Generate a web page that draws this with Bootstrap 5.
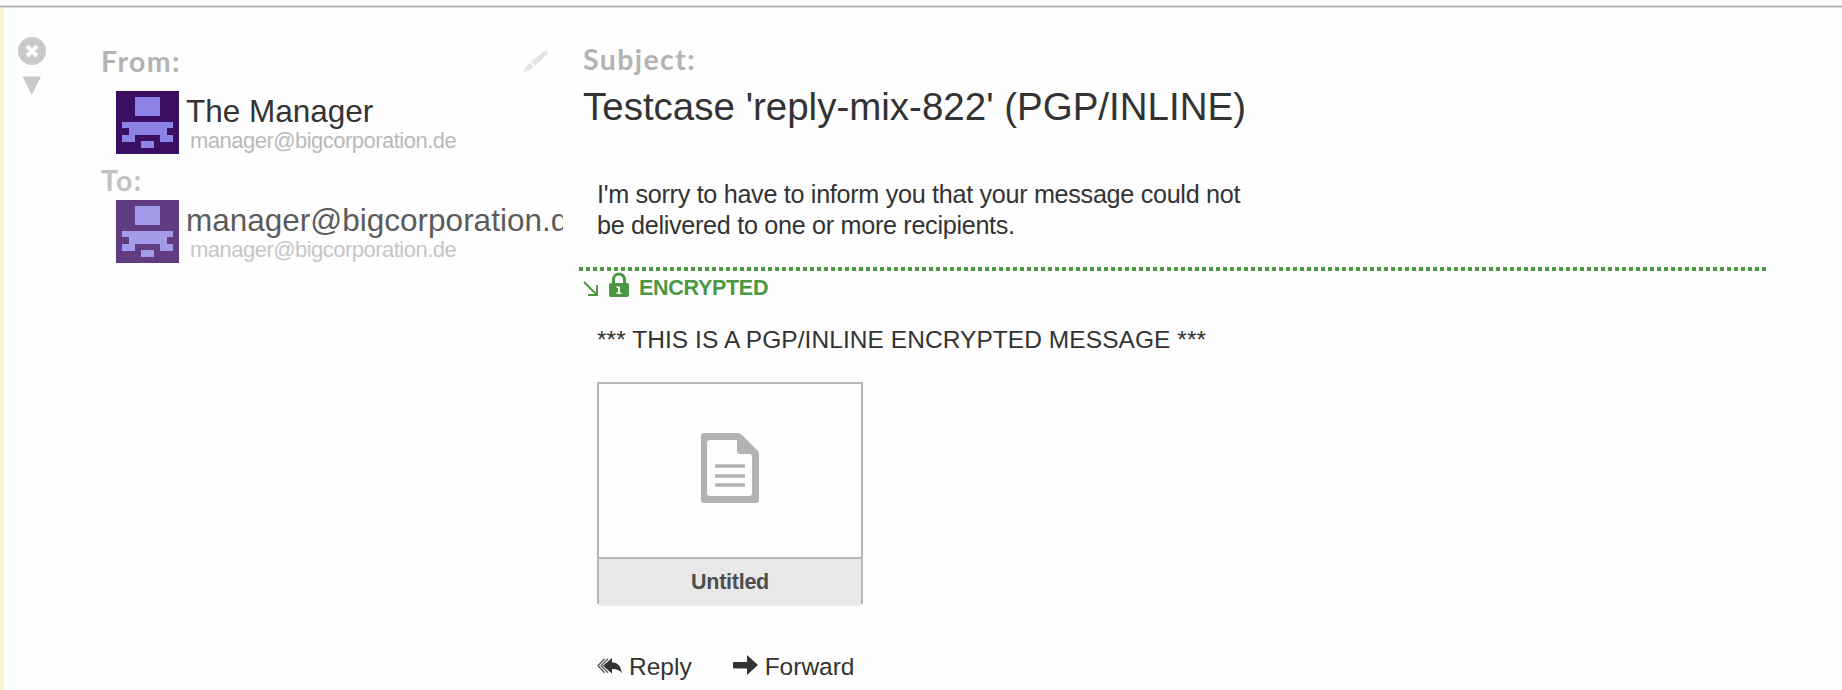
<!DOCTYPE html>
<html lang="en">
<head>
<meta charset="utf-8">
<title>Message</title>
<link href="https://cdn.jsdelivr.net/npm/bootstrap@5.3.0/dist/css/bootstrap.min.css" rel="stylesheet">
<style>
body{font-family:"Liberation Sans",Arial,sans-serif;background:#fefefe;color:#333;font-size:24.5px;line-height:31px;height:690px;overflow:hidden}
.topline{height:3px;margin-top:5px;background:#b2b2b2;border-top:1px solid #dcdcdc;border-bottom:1px solid #dcdcdc}
.message{height:682px;border-left:4px solid #faf6cf}
.tools{width:97px;padding:29px 0 0 14px}
.tools svg,.edit,.avatar,.ico{display:block;flex:none}
.people{width:462px;padding-top:35px;overflow:hidden}
.content{width:1187px;margin-left:16px;padding-top:33px}
.tag{font-family:Lato,sans-serif;font-weight:700;font-size:28.5px;line-height:36px;color:#b3b3b3;letter-spacing:1.4px}
.person{padding-left:15px;height:63px;white-space:nowrap}
.person .who{font-size:31.5px;line-height:40px;margin-left:7px}
.person .addr{font-size:22px;letter-spacing:-.52px;line-height:19px;color:#b9b9b9;margin-left:11px}
.faded{opacity:.8}
.subject{font-size:38.5px;line-height:46px;padding-left:4px;white-space:nowrap;margin:7px 0 0}
.part{padding-left:18px;white-space:nowrap}
.prose{font-size:25.2px;letter-spacing:-.31px;margin-top:49px}
.secure{height:36px;color:#4b9843;font-size:21.5px;letter-spacing:-.3px;font-weight:700;line-height:34px;padding-left:4px}
.attachment{width:266px;height:222px;margin-left:18px;border:2px solid #b7b7b7;border-bottom:0}
.preview{height:175px;border-bottom:2px solid #b7b7b7}
.fname{height:47px;background:#e8e8e8;color:#4d4d4d;font-size:21.5px;letter-spacing:-.25px;font-weight:700}
.acts{margin:47px 0 0 18px}
</style>
</head>
<body>
<svg class="d-none"><defs><g id="face"><path d="M19 6h25v19H19zM6 31h51v6h-6v7h6v7H44v-7H19v7H6v-7h7v-7H6zM25 50h13v7H25z"/></g></defs></svg>
<div class="topline"></div>
<main class="message d-flex">
  <div class="tools">
    <svg width="28" height="60" viewBox="0 0 28 60" fill="#c9c9c9"><circle cx="14" cy="14" r="14"/><path d="m9 9 10 10m0-10-10 10" stroke="#fefefe" stroke-width="4"/><path d="M4.500 39.500h18.500l-9.200 18.500z"/></svg>
  </div>
  <section class="people">
    <div class="tag d-flex justify-content-between"><span>From:</span>
      <svg class="edit" width="26" height="24" viewBox="0 0 26 24" style="margin:7px 14px 0 0" fill="#e3e3e3"><path d="M8.500 11.500 22 .8Q24.500 0 25 2.500q0 1.500-1.300 2.500L12 15.500zM0 22l4-6.500 3-2.500 3.500 4-3.500 3z"/></svg>
    </div>
    <div class="person d-flex" style="margin-top:12px">
      <svg class="avatar" width="63" height="63"><path fill="#390e63" d="M0 0h63v63H0z"/><use href="#face" fill="#8d82e6"/></svg>
      <div><div class="who">The Manager</div><div class="addr">manager@bigcorporation.de</div></div>
    </div>
    <div class="faded">
      <div class="tag" style="margin:8px 0 2px">To:</div>
      <div class="person d-flex">
        <svg class="avatar" width="63" height="63"><path fill="#390e63" d="M0 0h63v63H0z"/><use href="#face" fill="#8d82e6"/></svg>
        <div><div class="who">manager@bigcorporation.de</div><div class="addr">manager@bigcorporation.de</div></div>
      </div>
    </div>
  </section>
  <section class="content">
    <div class="tag ps-1">Subject:</div>
    <h1 class="subject fw-normal">Testcase 'reply-mix-822' (PGP/INLINE)</h1>
    <div class="part prose">I'm sorry to have to inform you that your message could not<br>be delivered to one or more recipients.</div>
    <svg class="d-block" width="1187" height="4" style="margin-top:26px"><path d="M0 2h1187" stroke="#4b9843" stroke-width="4" stroke-dasharray="4 3"/></svg>
    <div class="secure d-flex">
      <svg class="ico" width="15" height="15" viewBox="0 0 15 15" style="margin-top:10px" fill="none" stroke="#4b9843" stroke-width="1.900"><path d="m1 1 12 12M14 4v10H5"/></svg>
      <svg class="ico" width="20" height="25" viewBox="0 0 20 25" style="margin:1px 10px 0 11px"><path d="M4.500 13V7.500a5.500 5.500 0 0 1 11 0V13" fill="none" stroke="#4b9843" stroke-width="3"/><rect y="11" width="20" height="14" rx="2" fill="#4b9843"/><path d="M7.500 14.500H11v6h1.500V22h-5v-1.500H9V16H7.500z" fill="#fefefe"/></svg>
      <span>ENCRYPTED</span>
    </div>
    <div class="part" style="margin-top:17px;letter-spacing:.06px">*** THIS IS A PGP/INLINE ENCRYPTED MESSAGE ***</div>
    <div class="attachment" style="margin-top:27px">
      <div class="preview d-flex justify-content-center">
        <svg class="ico" width="58" height="70" viewBox="0 0 58 70" style="margin-top:49px"><path fill="#b3b3b3" fill-rule="evenodd" d="M3 0h34q2 0 4 2l15 15q2 2 2 4v46q0 3-3 3H3q-3 0-3-3V3Q0 0 3 0zm6 7q-3 0-3 3v50q0 3 3 3h39q3 0 3-3V24q0-3-3-3H39q-3 0-3-3V7z"/><path d="M14 33h30M14 43h30M14 52h30" stroke="#b3b3b3" stroke-width="3.500"/></svg>
      </div>
      <div class="fname d-flex align-items-center justify-content-center">Untitled</div>
    </div>
    <div class="acts d-flex">
      <svg class="ico" width="26" height="17" viewBox="0 0 26 17" style="margin:7px 6px 0 0"><path fill="#333" d="M15 0v4.200q8.500 0 10 11-3-4.200-10-4.200v4.500L6 7.800z"/><path d="M7.500.8 1 7.800l6.500 7M11 .8 4.200 7.800l6.800 7" fill="none" stroke="#555" stroke-width="1.300"/></svg>
      <span>Reply</span>
      <svg class="ico" width="25" height="20" viewBox="0 0 25 20" style="margin:4px 7px 0 41px" fill="#333"><path d="M1 7h13V0l11 10-11 10v-6.500H1Q0 13.500 0 12V8q0-1 1-1z"/></svg>
      <span>Forward</span>
    </div>
  </section>
</main>
<script src="https://cdn.jsdelivr.net/npm/bootstrap@5.3.0/dist/js/bootstrap.bundle.min.js"></script>
</body>
</html>
